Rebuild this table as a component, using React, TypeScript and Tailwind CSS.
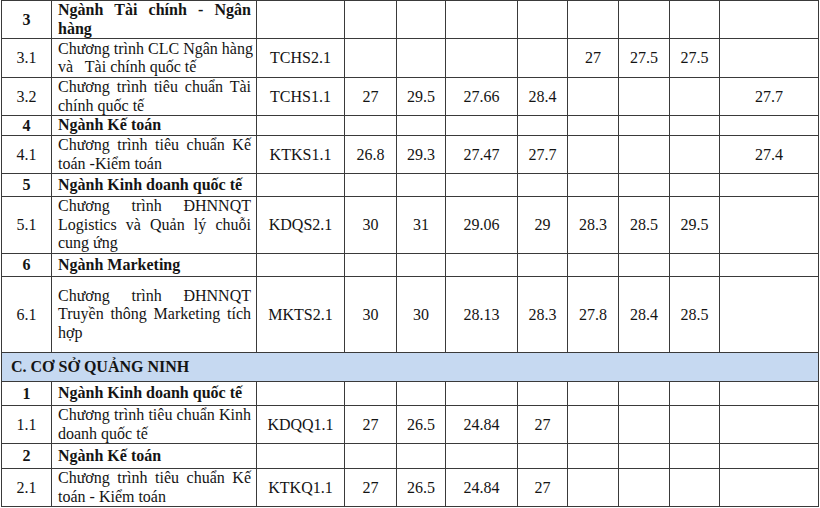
import React from "react";

type Row =
  | { kind: "major"; no: string; title: string; h: number }
  | { kind: "minor"; no: string; lines: string[]; code: string; vals: string[]; h: number }
  | { kind: "section"; title: string; h: number };

const colWidths = [50, 205, 88, 52, 49, 72, 50, 51, 51, 50, 99];

const rows: Row[] = [
  { kind: "major", no: "3", title: "Ngành Tài chính - Ngân|hàng", h: 38 },
  {
    kind: "minor",
    no: "3.1",
    lines: ["Chương trình CLC Ngân hàng", "và\u00a0\u00a0 Tài chính quốc tế"],
    code: "TCHS2.1",
    vals: ["", "", "", "", "27", "27.5", "27.5", ""],
    h: 39,
  },
  {
    kind: "minor",
    no: "3.2",
    lines: ["Chương trình tiêu chuẩn Tài", "chính quốc tế"],
    code: "TCHS1.1",
    vals: ["27", "29.5", "27.66", "28.4", "", "", "", "27.7"],
    h: 38,
  },
  { kind: "major", no: "4", title: "Ngành Kế toán", h: 20 },
  {
    kind: "minor",
    no: "4.1",
    lines: ["Chương trình tiêu chuẩn Kế", "toán -Kiểm toán"],
    code: "KTKS1.1",
    vals: ["26.8", "29.3", "27.47", "27.7", "", "", "", "27.4"],
    h: 38,
  },
  { kind: "major", no: "5", title: "Ngành Kinh doanh quốc tế", h: 23 },
  {
    kind: "minor",
    no: "5.1",
    lines: ["Chương trình ĐHNNQT", "Logistics và Quản lý chuỗi", "cung ứng"],
    code: "KDQS2.1",
    vals: ["30", "31", "29.06", "29", "28.3", "28.5", "29.5", ""],
    h: 57,
  },
  { kind: "major", no: "6", title: "Ngành Marketing", h: 23 },
  {
    kind: "minor",
    no: "6.1",
    lines: ["Chương trình ĐHNNQT", "Truyền thông Marketing tích", "hợp"],
    code: "MKTS2.1",
    vals: ["30", "30", "28.13", "28.3", "27.8", "28.4", "28.5", ""],
    h: 76,
  },
  { kind: "section", title: "C. CƠ SỞ QUẢNG NINH", h: 29 },
  { kind: "major", no: "1", title: "Ngành Kinh doanh quốc tế", h: 24 },
  {
    kind: "minor",
    no: "1.1",
    lines: ["Chương trình tiêu chuẩn Kinh", "doanh quốc tế"],
    code: "KDQQ1.1",
    vals: ["27", "26.5", "24.84", "27", "", "", "", ""],
    h: 37,
  },
  { kind: "major", no: "2", title: "Ngành Kế toán", h: 25 },
  {
    kind: "minor",
    no: "2.1",
    lines: ["Chương trình tiêu chuẩn Kế", "toán - Kiểm toán"],
    code: "KTKQ1.1",
    vals: ["27", "26.5", "24.84", "27", "", "", "", ""],
    h: 37,
  },
];

const cell = "border border-[#3a3a3a] p-0 align-middle";

// Lines of the name column: all but the last are stretched edge to edge, like Word's justify
const NameLines: React.FC<{ lines: string[]; bold?: boolean }> = ({ lines, bold }) => (
  <div className={`pl-[6px] pr-[5px] leading-[18.5px] ${bold ? "font-bold" : ""}`}>
    {lines.map((l, i) => (
      <div
        key={i}
        className={
          i < lines.length - 1
            ? "whitespace-nowrap text-justify [text-align-last:justify]"
            : "whitespace-nowrap text-left"
        }
      >
        {l}
      </div>
    ))}
  </div>
);

export default function App() {
  return (
    <div className="w-[820px] h-[508px] bg-white pl-[1px] overflow-hidden [font-family:'Liberation_Serif',serif] text-[16px] text-[#141414]">
      <table className="table-fixed border-collapse w-[818px]">
        <colgroup>
          {colWidths.map((w, i) => (
            <col key={i} style={{ width: w }} />
          ))}
        </colgroup>
        <tbody>
          {rows.map((r, idx) => {
            if (r.kind === "section") {
              return (
                <tr key={idx} style={{ height: r.h }}>
                  <td colSpan={11} className={`${cell} bg-[#c6d9f1] font-bold pl-[9px] leading-[18px]`}>
                    {r.title}
                  </td>
                </tr>
              );
            }
            if (r.kind === "major") {
              return (
                <tr key={idx} style={{ height: r.h }}>
                  <td className={`${cell} text-center font-bold leading-[18px]`}>{r.no}</td>
                  <td className={cell}>
                    <NameLines lines={r.title.split("|")} bold />
                  </td>
                  {Array.from({ length: 9 }).map((_, i) => (
                    <td key={i} className={cell} />
                  ))}
                </tr>
              );
            }
            return (
              <tr key={idx} style={{ height: r.h }}>
                <td className={`${cell} text-center leading-[18px]`}>{r.no}</td>
                <td className={cell}>
                  <NameLines lines={r.lines} />
                </td>
                <td className={`${cell} text-center leading-[18px]`}>{r.code}</td>
                {r.vals.map((v, i) => (
                  <td key={i} className={`${cell} text-center leading-[18px]`}>
                    {v}
                  </td>
                ))}
              </tr>
            );
          })}
        </tbody>
      </table>
    </div>
  );
}
